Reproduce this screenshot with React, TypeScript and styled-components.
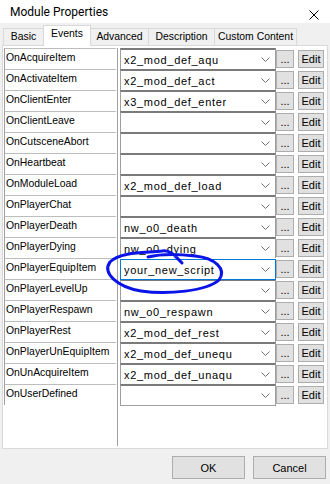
import React from 'react';
import styled, { createGlobalStyle } from 'styled-components';

const GlobalStyle = createGlobalStyle`
    body{
        margin: 0;
        background: #f0f0f0;
        font-family: "Liberation Sans", Arial, sans-serif;
        font-size: 11px;
        color: #000;
    }
`;

const Window = styled.div`
    position: relative;
    width: 330px;
    height: 484px;
    display: flex;
    flex-direction: column;
    background: #f0f0f0;
    overflow: hidden;
`;

const TitleBar = styled.div`
    height: 23px;
    background: #fff;
    display: flex;
    align-items: center;
    justify-content: space-between;
    padding-left: 10px;
    font-family: Roboto, "Liberation Sans", sans-serif;
    font-size: 12px;
`;

const CloseBox = styled.div`
    width: 32px;
    height: 23px;
    display: flex;
    align-items: center;
    justify-content: center;
    margin-top: 6px;
`;

const TabStrip = styled.div`
    height: 22px;
    display: flex;
    align-items: flex-end;
    padding-left: 3px;
`;

const Tab = styled.div<{ $w: number; $active?: boolean }>`
    box-sizing: border-box;
    width: ${p => p.$w}px;
    height: ${p => (p.$active ? 21 : 17)}px;
    margin-left: -1px;
    margin-bottom: ${p => (p.$active ? -1 : 0)}px;
    border: 1px solid #d9d9d9;
    border-bottom: none;
    background: ${p => (p.$active ? '#fff' : '#f0f0f0')};
    position: relative;
    z-index: ${p => (p.$active ? 2 : 1)};
    display: flex;
    justify-content: center;
    padding-top: 2px;
    font-size: 10.4px;
    white-space: nowrap;
    &:first-child{ margin-left: 0; }
`;

const Panel = styled.div`
    box-sizing: border-box;
    height: 404px;
    margin: 0 2px;
    border: 1px solid #d9d9d9;
    background: #fff;
    padding: 2px 3px 2px 1px;
    display: flex;
`;

const LabelColumn = styled.div`
    box-sizing: border-box;
    width: 114px;
    border-right: 1px solid #a0a0a0;
`;

const LabelCell = styled.div`
    box-sizing: border-box;
    width: 112px;
    height: 21px;
    border-left: 1px solid #a0a0a0;
    border-top: 1px solid #bdbdbd;
    padding: 2px 0 0 1px;
    line-height: 13px;
    font-size: 10.4px;
    white-space: nowrap;
    overflow: hidden;
`;

const EventColumn = styled.div`
    margin-left: 2px;
    display: flex;
    flex-direction: column;
`;

const EventRow = styled.div`
    display: flex;
    height: 21px;
    align-items: flex-start;
`;

const Combo = styled.div<{ $focused?: boolean; $last?: boolean }>`
    box-sizing: border-box;
    width: 156px;
    height: ${p => (p.$last ? 22 : 21)}px;
    border-top: 2px solid #7a7a7a;
    border-left: 1px solid #a0a0a0;
    border-right: 1px solid #a0a0a0;
    border-bottom: ${p => (p.$last ? '1px solid #a0a0a0' : 'none')};
    ${p => p.$focused && `
        border: 1px solid #0078d7;
        margin-top: 1px;
        height: 21px;
    `}
    background: #fff;
    display: flex;
    align-items: center;
    padding-left: 3px;
    padding-right: 5px;
    position: relative;
    z-index: ${p => (p.$focused ? 1 : 0)};
`;

const ComboText = styled.span`
    flex: 1;
    white-space: nowrap;
    overflow: hidden;
    letter-spacing: 0.7px;
`;

const SmallButton = styled.button<{ $w: number; $gap: number }>`
    box-sizing: border-box;
    width: ${p => p.$w}px;
    height: 18px;
    margin: 2px 0 0 ${p => p.$gap}px;
    padding: 0;
    border: 1px solid #adadad;
    background: #e1e1e1;
    font-family: "Liberation Sans", Arial, sans-serif;
    font-size: 11px;
    color: #000;
    line-height: 14px;
`;

const Footer = styled.div`
    display: flex;
    justify-content: flex-end;
    gap: 8px;
    padding: 7px 4px 0 0;
`;

const DialogButton = styled.button`
    box-sizing: border-box;
    width: 73px;
    height: 23px;
    border: 1px solid #adadad;
    background: #e1e1e1;
    font-family: "Liberation Sans", Arial, sans-serif;
    font-size: 11px;
    color: #000;
`;

const Scribble = styled.svg`
    position: absolute;
    left: 0;
    top: 0;
    pointer-events: none;
    z-index: 5;
`;

type EventItem = { name: string; script: string };

const EVENTS: EventItem[] = [
    { name: 'OnAcquireItem', script: 'x2_mod_def_aqu' },
    { name: 'OnActivateItem', script: 'x2_mod_def_act' },
    { name: 'OnClientEnter', script: 'x3_mod_def_enter' },
    { name: 'OnClientLeave', script: '' },
    { name: 'OnCutsceneAbort', script: '' },
    { name: 'OnHeartbeat', script: '' },
    { name: 'OnModuleLoad', script: 'x2_mod_def_load' },
    { name: 'OnPlayerChat', script: '' },
    { name: 'OnPlayerDeath', script: 'nw_o0_death' },
    { name: 'OnPlayerDying', script: 'nw_o0_dying' },
    { name: 'OnPlayerEquipItem', script: 'your_new_script' },
    { name: 'OnPlayerLevelUp', script: '' },
    { name: 'OnPlayerRespawn', script: 'nw_o0_respawn' },
    { name: 'OnPlayerRest', script: 'x2_mod_def_rest' },
    { name: 'OnPlayerUnEquipItem', script: 'x2_mod_def_unequ' },
    { name: 'OnUnAcquireItem', script: 'x2_mod_def_unaqu' },
    { name: 'OnUserDefined', script: '' },
];

const TABS = [
    { label: 'Basic', w: 41 },
    { label: 'Events', w: 48, active: true },
    { label: 'Advanced', w: 59 },
    { label: 'Description', w: 67 },
    { label: 'Custom Content', w: 83 },
];

const Chevron = () => (
    <svg width="9" height="5" viewBox="0 0 9 5">
        <polyline points="0.5,0.5 4.5,4.5 8.5,0.5" fill="none" stroke="#707070" strokeWidth="1" />
    </svg>
);

const App = () => (
    <>
        <GlobalStyle />
        <Window>
            <TitleBar>
                <span>Module Properties</span>
                <CloseBox>
                    <svg width="10" height="10" viewBox="0 0 10 10">
                        <path d="M0.5 0.5 L9.5 9.5 M9.5 0.5 L0.5 9.5" stroke="#000" strokeWidth="1" />
                    </svg>
                </CloseBox>
            </TitleBar>

            <TabStrip>
                {TABS.map(t => (
                    <Tab key={t.label} $w={t.w} $active={t.active}>{t.label}</Tab>
                ))}
            </TabStrip>

            <Panel>
                <LabelColumn>
                    {EVENTS.map(e => <LabelCell key={e.name}>{e.name}</LabelCell>)}
                </LabelColumn>
                <EventColumn>
                    {EVENTS.map((e, i) => (
                        <EventRow key={e.name}>
                            <Combo
                                $focused={e.script === 'your_new_script'}
                                $last={i === EVENTS.length - 1}
                            >
                                <ComboText>{e.script}</ComboText>
                                <Chevron />
                            </Combo>
                            <SmallButton $w={18} $gap={0}>...</SmallButton>
                            <SmallButton $w={26} $gap={4}>Edit</SmallButton>
                        </EventRow>
                    ))}
                </EventColumn>
            </Panel>

            <Footer>
                <DialogButton>OK</DialogButton>
                <DialogButton>Cancel</DialogButton>
            </Footer>

            {/* hand-drawn marker circle around the new script */}
            <Scribble width="330" height="484" viewBox="0 0 330 484">
                <path
                    d="M182 263 C176 257 170 249 162 251 C148 253 121 251 110 262 C102 273 117 287 141 291 C167 295 207 291 219 280 C227 269 215 258 195 256 C178 254 160 254 148 257"
                    fill="none"
                    stroke="#0a14e6"
                    strokeWidth="3"
                    strokeLinecap="round"
                />
            </Scribble>
        </Window>
    </>
);

export default App;
